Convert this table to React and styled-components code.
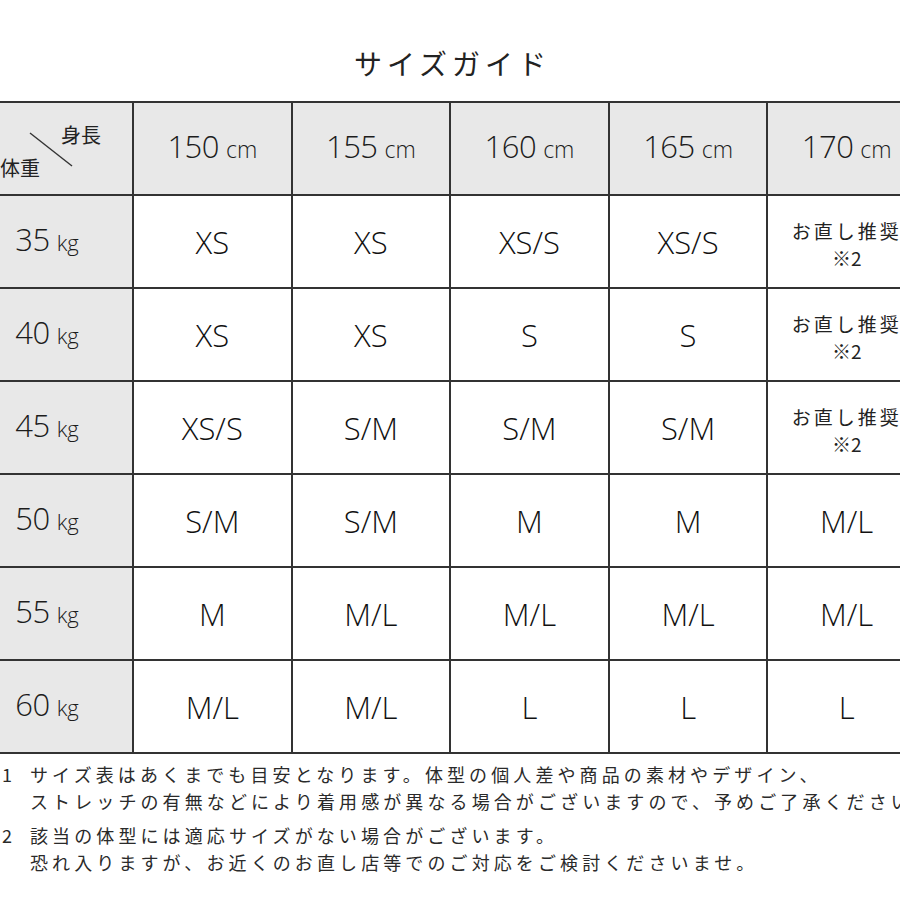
import React from "react";
import styled, { createGlobalStyle } from "styled-components";

const GlobalStyle = createGlobalStyle`
  html, body {
    margin: 0;
    padding: 0;
    background: #fff;
    overflow: hidden;
  }
  body {
    font-family: "Open Sans", "Noto Sans CJK JP", sans-serif;
    color: #1c1c1c;
  }
`;

const heights = [150, 155, 160, 165, 170];

const rows = [
  { kg: 35, sizes: ["XS", "XS", "XS/S", "XS/S", null] },
  { kg: 40, sizes: ["XS", "XS", "S", "S", null] },
  { kg: 45, sizes: ["XS/S", "S/M", "S/M", "S/M", null] },
  { kg: 50, sizes: ["S/M", "S/M", "M", "M", "M/L"] },
  { kg: 55, sizes: ["M", "M/L", "M/L", "M/L", "M/L"] },
  { kg: 60, sizes: ["M/L", "M/L", "L", "L", "L"] },
];

const SizeGuide = () => {
  return (
    <Page>
      <Title>サイズガイド</Title>

      <Grid>
        <CornerCell>
          <svg width="170" height="91">
            <line x1="68" y1="30" x2="110" y2="63" stroke="#333" strokeWidth="1.4" />
          </svg>
          <CornerLabel style={{ left: 99, top: 20 }}>身長</CornerLabel>
          <CornerLabel style={{ left: 38, top: 53 }}>体重</CornerLabel>
        </CornerCell>
        {heights.map((h) => (
          <Cell key={h} $shade>
            <Measure>
              {h}
              <Unit>cm</Unit>
            </Measure>
          </Cell>
        ))}

        {rows.map((row) => (
          <React.Fragment key={row.kg}>
            <Cell $shade>
              <Measure>
                {row.kg}
                <Unit $small>kg</Unit>
              </Measure>
            </Cell>
            {row.sizes.map((s, i) => (
              <Cell key={i}>
                {s ? (
                  <Size>{s}</Size>
                ) : (
                  <Note>
                    <span>お直し推奨</span>
                    <NoteRef>※2</NoteRef>
                  </Note>
                )}
              </Cell>
            ))}
          </React.Fragment>
        ))}
      </Grid>

      <Notes>
        <NoteGroup>
          <Marker>1</Marker>
          <NoteText>
            サイズ表はあくまでも目安となります。体型の個人差や商品の素材やデザイン、
            <br />
            ストレッチの有無などにより着用感が異なる場合がございますので、予めご了承ください。
          </NoteText>
        </NoteGroup>
        <NoteGroup>
          <Marker>2</Marker>
          <NoteText>
            該当の体型には適応サイズがない場合がございます。
            <br />
            恐れ入りますが、お近くのお直し店等でのご対応をご検討くださいませ。
          </NoteText>
        </NoteGroup>
      </Notes>
    </Page>
  );
};

const Page = styled.div`
  width: 900px;
  height: 900px;
  overflow: hidden;
`;

const Title = styled.h1`
  margin: 0;
  height: 101px;
  box-sizing: border-box;
  padding-top: 25px;
  padding-left: 5px;
  display: flex;
  align-items: center;
  justify-content: center;
  font-family: "Noto Sans CJK JP", sans-serif;
  font-weight: 400;
  font-size: 28px;
  letter-spacing: 5px;
  color: #222;
`;

const Grid = styled.div`
  display: grid;
  grid-template-columns: 170px repeat(5, 156.6px);
  grid-template-rows: repeat(7, 91px);
  gap: 2px;
  background: #333;
  border-top: 2px solid #333;
  border-bottom: 2px solid #333;
  margin-left: -38px;
  width: max-content;
`;

const Cell = styled.div`
  background: ${(p) => (p.$shade ? "#e8e8e8" : "#fff")};
  display: flex;
  align-items: center;
  justify-content: center;
  white-space: nowrap;
`;

const CornerCell = styled.div`
  position: relative;
  background: #e8e8e8;

  svg {
    position: absolute;
    left: 0;
    top: 0;
  }
`;

const CornerLabel = styled.span`
  position: absolute;
  font-family: "Noto Sans CJK JP", sans-serif;
  font-size: 20px;
  line-height: 24px;
  color: #222;
`;

const Measure = styled.span`
  font-size: 31px;
  font-weight: 300;
  line-height: 1;
  letter-spacing: -0.5px;
  margin-top: -4px;
`;

const Unit = styled.span`
  font-size: ${(p) => (p.$small ? "22px" : "23px")};
  margin-left: 7px;
  letter-spacing: 0;
`;

const Size = styled.span`
  font-size: 31px;
  font-weight: 300;
  color: #111;
`;

const Note = styled.div`
  display: flex;
  flex-direction: column;
  align-items: center;
  font-family: "Noto Sans CJK JP", sans-serif;
  font-size: 19px;
  line-height: 27px;
  letter-spacing: 3px;
  color: #222;
  padding-top: 4px;
`;

const NoteRef = styled.span`
  letter-spacing: 0;
`;

const Notes = styled.div`
  padding-top: 7px;
  font-family: "Noto Sans CJK JP", sans-serif;
  font-size: 18px;
  line-height: 27px;
  color: #2a2a2a;
`;

const NoteGroup = styled.div`
  display: flex;
  margin-bottom: 7px;
`;

const Marker = styled.span`
  width: 30px;
  box-sizing: border-box;
  padding-left: 2px;
  flex-shrink: 0;
`;

const NoteText = styled.p`
  margin: 0;
  letter-spacing: 4.1px;
  white-space: nowrap;
`;

export default function App() {
  return (
    <>
      <GlobalStyle />
      <SizeGuide />
    </>
  );
}
